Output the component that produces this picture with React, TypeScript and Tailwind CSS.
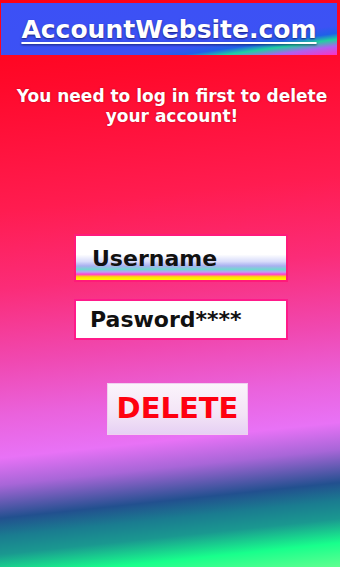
export default function App() {
  const font = { fontFamily: '"DejaVu Sans", Verdana, sans-serif' };

  return (
    <div
      className="flex h-[567px] w-[340px] flex-col overflow-hidden bg-[linear-gradient(174deg,#ff0012_0%,#ff0a2c_15%,#ff1c50_35%,#fb2c78_48%,#f048b0_60%,#ea62dc_69%,#e872f6_76%,#a866d8_80.5%,#22508f_86%,#1a7c90_89%,#1a9890_92%,#18ff8c_96%,#60ff90_100%)]"
      style={font}
    >
      {/* Header */}
      <div className="ml-[1px] mr-[3px] mt-[3px] flex h-[52px] items-center justify-center bg-[linear-gradient(172deg,#3c50f6_0%,#3c52f4_70%,#2060e8_78%,#20d0a0_84%,#b060f0_91%,#ff30c0_100%)]">
        <a
          href="#"
          className="text-[25px] font-bold leading-none text-white underline decoration-[1.5px] underline-offset-[4px] [text-shadow:0_1px_2px_rgba(0,0,40,0.6)]"
        >
          AccountWebsite.com
        </a>
      </div>

      {/* Message */}
      <p className="mt-[31px] pl-[6px] pr-[2px] text-center text-[17px] font-bold leading-[20px] text-white [text-shadow:0_0_2px_rgba(120,0,0,0.6)]">
        You need to log in first to delete your account!
      </p>

      {/* Form */}
      <div className="ml-[22px] mt-[108px] flex flex-col items-center gap-[17px]">
        <div className="flex h-[48px] w-[214px] items-center border-2 border-[#ff1a7a] bg-[linear-gradient(180deg,#ffffff_0%,#ffffff_42%,#d8dcfa_58%,#a8b0f0_68%,#70d8d0_76%,#c0a0f0_82%,#ff40d0_87%,#ffe000_93%,#ffff00_100%)] pl-[16px]">
          <span className="text-[22px] font-bold text-[#111]">Username</span>
        </div>
        <div className="flex h-[41px] w-[214px] items-center border-2 border-[#ff1a8a] bg-white pl-[14px]">
          <span className="text-[22px] font-bold text-[#111]">Pasword****</span>
        </div>
      </div>

      <div className="ml-[15px] mt-[43px] flex justify-center">
        <button className="flex h-[52px] w-[141px] items-center justify-center border border-[#f0d0f0] bg-[linear-gradient(180deg,#fbf4fb_0%,#f3e4f6_60%,#e6d0f4_100%)] pb-[1px]">
          <span className="text-[29px] font-bold text-[#ff0010]">DELETE</span>
        </button>
      </div>
    </div>
  );
}
